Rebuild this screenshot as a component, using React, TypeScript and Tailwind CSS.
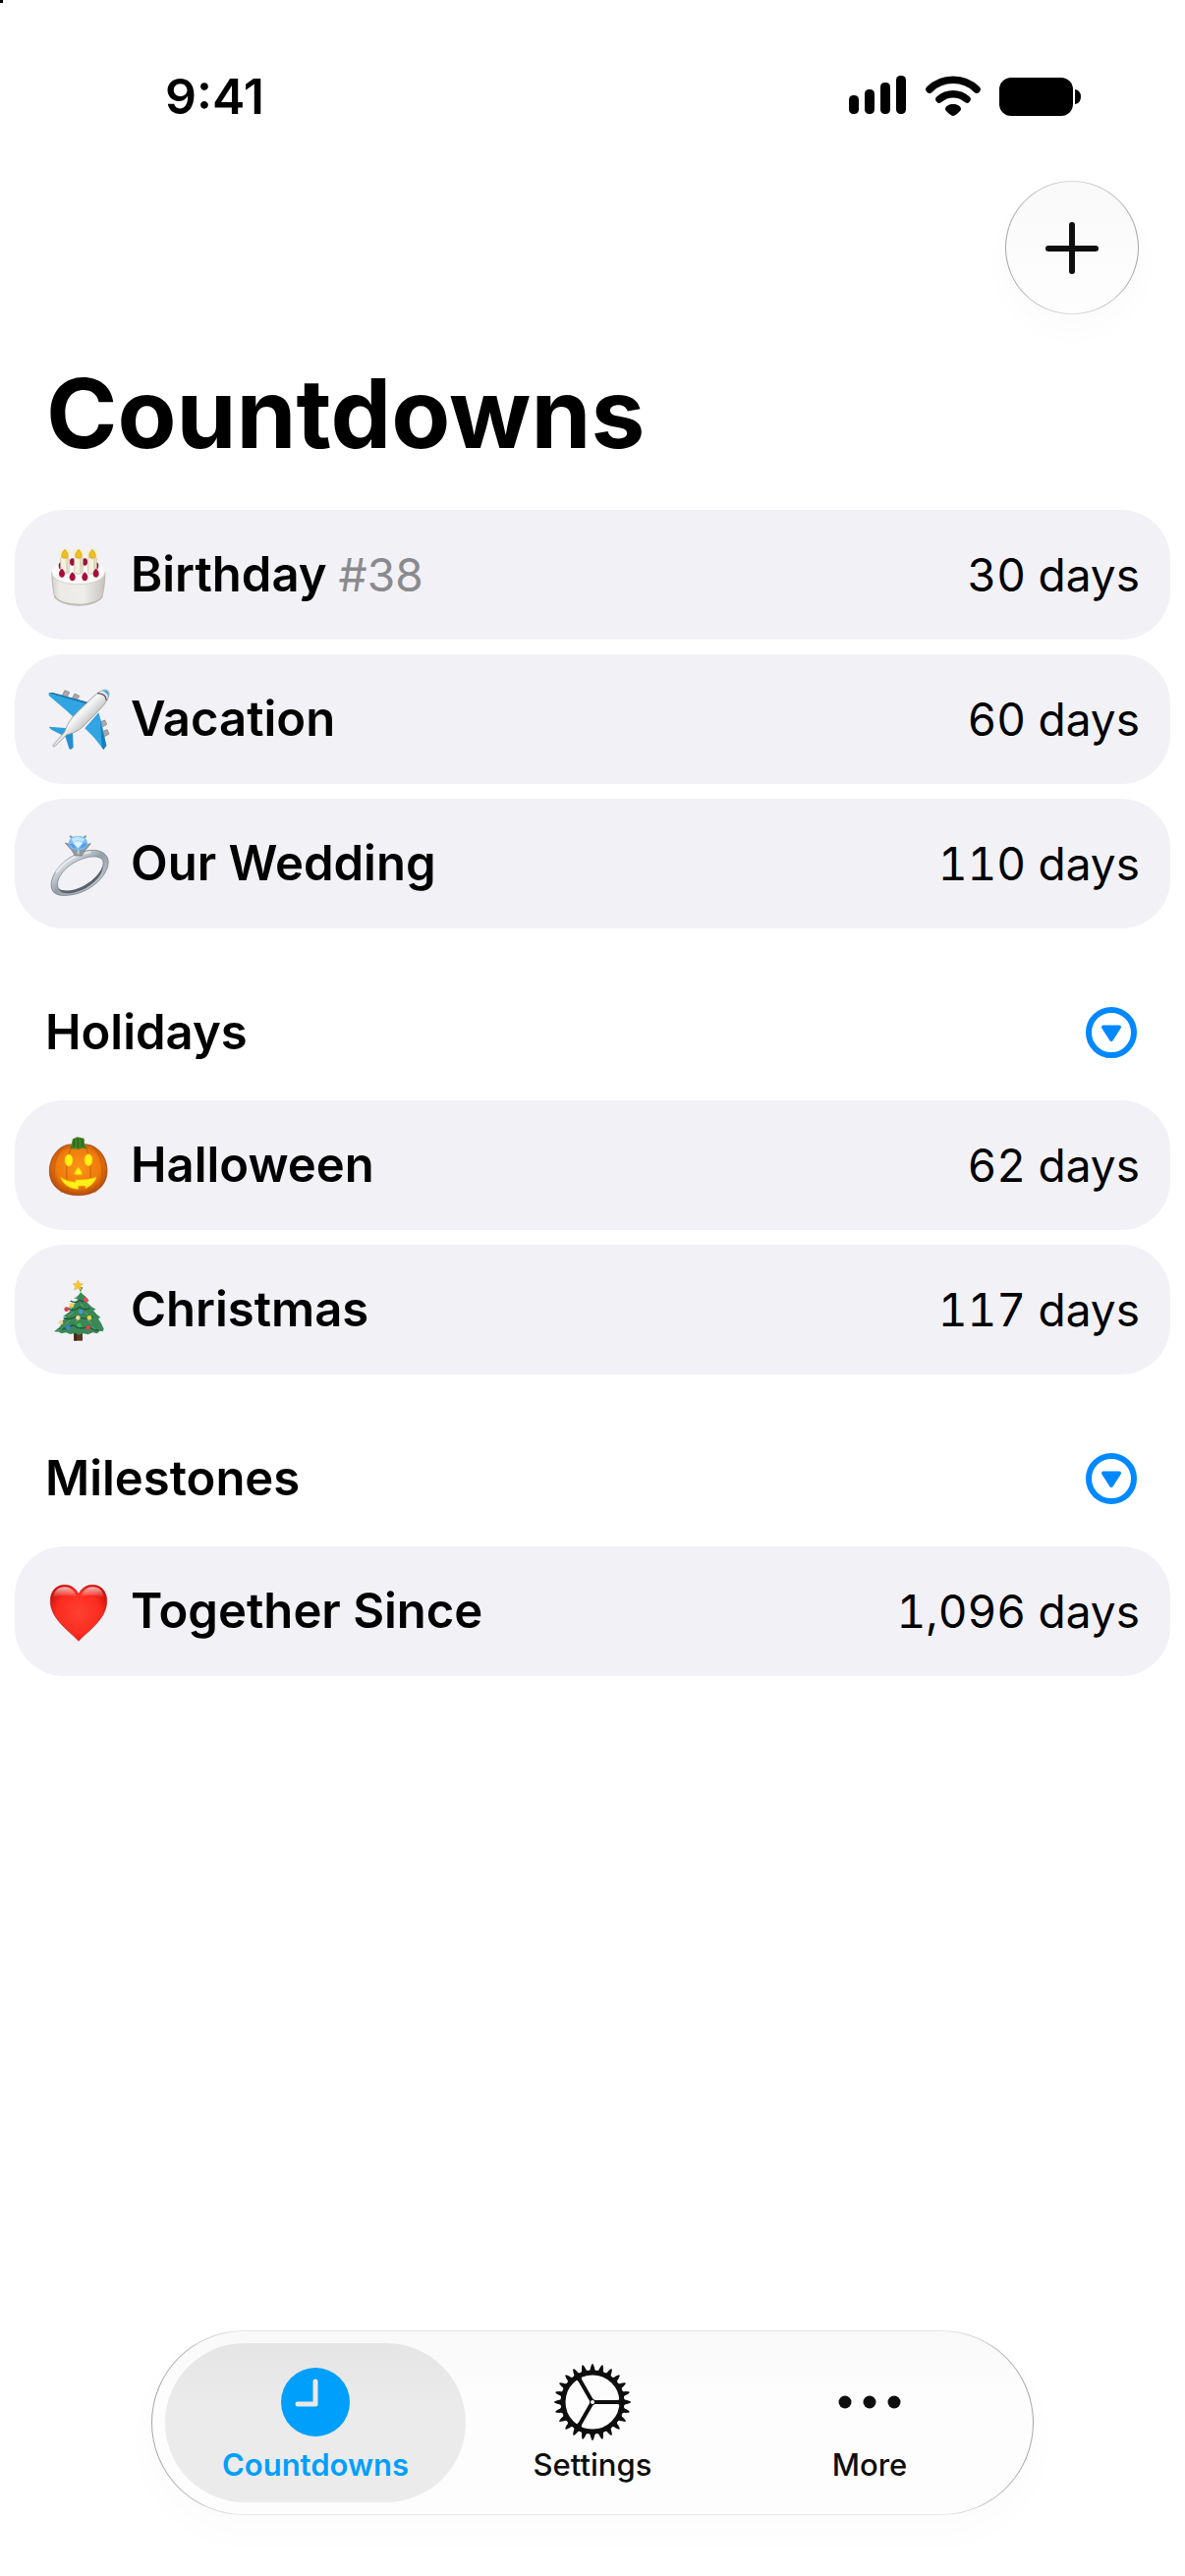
import type { ReactNode } from "react";

function CakeIcon() {
  return (
    <svg viewBox="45 66 198 198" className="size-[66px] shrink-0" aria-hidden="true">
      <defs>
        <linearGradient id="cakeSide" x1="0" x2="1" y1="0" y2="0">
          <stop offset="0" stopColor="#d2cfca" />
          <stop offset="0.15" stopColor="#ebeae6" />
          <stop offset="0.6" stopColor="#eeedea" />
          <stop offset="1" stopColor="#c6c3bd" />
        </linearGradient>
        <radialGradient id="glow">
          <stop offset="0" stopColor="#ffe45c" stopOpacity="1" />
          <stop offset="1" stopColor="#fff3a8" stopOpacity="0" />
        </radialGradient>
      </defs>
      <path d="M65 158c1 28 4 54 8 70 4 16 34 31 74 31s69-15 73-31c4-16 7-42 8-70z" fill="url(#cakeSide)" stroke="#aaa69e" strokeWidth="2" />
      <path d="M73 230c8 15 36 26 74 26s66-11 73-26" fill="none" stroke="#bcb8b0" strokeWidth="4" />
      <ellipse cx="146" cy="158" rx="81" ry="36" fill="#fbfbfa" />
      <path d="M65 158c2 48 160 48 162 0" fill="none" stroke="#d8d5cf" strokeWidth="3" />
      {[[128, 126], [166, 126], [94, 138], [200, 138]].map(([x, y]) => (
        <ellipse key={x} cx={x} cy={y} rx="8" ry="11" fill="#9c1237" />
      ))}
      {[105, 147, 189].map((x) => (
        <g key={x}>
          <circle cx={x} cy="101" r="22" fill="url(#glow)" />
          <rect x={x - 13} y="111" width="26" height="51" rx="6" fill="#f4f1df" stroke="#bfbaa0" strokeWidth="2" />
          <path d={`M${x + 7} 114v45`} stroke="#dad5bb" strokeWidth="7" />
          <path d={`M${x} 88c7 9 11 15 9 22-2 6-16 6-18 0-2-7 2-13 9-22z`} fill="#f0c022" stroke="#c4961a" strokeWidth="2" />
        </g>
      ))}
      {[[96, 160], [128, 171], [166, 171], [200, 160]].map(([x, y]) => (
        <path key={x} d={`M${x} ${y - 14}c6 5 9 10 9 15 0 8-4 12-9 12s-9-4-9-12c0-5 3-10 9-15z`} fill="#a80f3a" />
      ))}
    </svg>
  );
}

function PlaneIcon() {
  return (
    <svg viewBox="45 57 198 198" className="size-[66px] shrink-0" aria-hidden="true">
      <defs>
        <linearGradient id="body" x1="0" y1="0" x2="1" y2="1">
          <stop offset="0.3" stopColor="#b8b8b8" />
          <stop offset="0.45" stopColor="#f7f7f7" />
          <stop offset="0.58" stopColor="#cccccc" />
          <stop offset="0.72" stopColor="#7d7d7d" />
        </linearGradient>
      </defs>
      <g fill="#aaa9a8" stroke="#777" strokeWidth="2">
        <path d="M95 88l10-20 14 6-10 20z" />
        <path d="M124 98l11-20 14 7-12 20z" />
        <path d="M207 168l20-9 6 13-19 11z" />
        <path d="M214 196l20-8 6 13-19 11z" />
      </g>
      <path d="M56 76l11-1 107 29-14 42-22 10-30-28-52-44z" fill="#31a5e4" />
      <path d="M56 76l11-1 107 29-3 5z" fill="#1b6e9d" />
      <path d="M166 184l42-48 8 26 16 75-9 12-28-36z" fill="#31a5e4" />
      <path d="M213 162l19 75-9 12-5-8z" fill="#1680bb" />
      <path d="M56 179l60 5-9 26-43-22z" fill="#2d9edc" />
      <path d="M104 202l25-6 2 46-8 7-5-3z" fill="#2590ce" />
      <path d="M68 237l36-42c9-26 22-45 42-64l46-44c15-14 29-22 40-20 9 2 10 12 5 24-5 14-17 27-33 43l-38 39c-16 17-34 26-54 30l-40 38z" fill="url(#body)" stroke="#858585" strokeWidth="2" />
      <path d="M218 69c16-6 24 4 20 19-2-9-9-16-20-19z" fill="#35a9e6" />
      <path d="M204 77c18 0 27 7 28 22" fill="none" stroke="#575757" strokeWidth="4" />
    </svg>
  );
}

function RingIcon() {
  return (
    <svg viewBox="45 48 198 198" className="size-[66px] shrink-0" aria-hidden="true">
      <defs>
        <linearGradient id="band" x1="0" y1="0" x2="1" y2="1">
          <stop offset="0" stopColor="#8f959c" />
          <stop offset="0.28" stopColor="#d3d8dd" />
          <stop offset="0.5" stopColor="#949da7" />
          <stop offset="0.75" stopColor="#b9c0c8" />
          <stop offset="1" stopColor="#5f6872" />
        </linearGradient>
      </defs>
      <path
        fillRule="evenodd"
        d="M65 224c-7-22 7-54 35-80 32-29 80-44 108-36 24 7 34 24 28 47-9 38-58 79-108 87-34 6-57 1-63-18zM84 220c5 13 24 14 43 10 40-8 83-43 93-72 6-18 0-30-20-32-24-3-63 11-88 33-22 19-34 44-28 61z"
        fill="url(#band)"
        stroke="#6a727b"
        strokeWidth="2"
      />
      <path d="M221 152c-6 28-50 68-94 76-18 3-33 2-42-5 7 16 28 17 46 13 46-10 92-48 90-84z" fill="#59626c" />
      <path d="M80 172c20-30 60-55 102-60" fill="none" stroke="#eef1f4" strokeWidth="7" strokeLinecap="round" opacity="0.75" />
      <path d="M106 84l12 4 20 18h18l20-18 8-2-18 22-9 15h-21l-9-15z" fill="#949aa1" stroke="#6f767e" strokeWidth="2" />
      <path d="M122 64l8 6M168 64l-8 6" stroke="#8d949b" strokeWidth="6" strokeLinecap="round" />
      <ellipse cx="145" cy="84" rx="29" ry="22" fill="#79c0f8" />
      <path d="M124 72l20-8 22 8-8 10-14-6-12 8z" fill="#bfe6ff" />
      <path d="M130 84l14-6 16 6-15 16z" fill="#dcf4ff" />
      <path d="M118 86l12 0 12 16-14-4zM174 84l-13 1-12 18 16-6z" fill="#4f9fec" />
      <path d="M146 116v-8" stroke="#c7ccd1" strokeWidth="6" strokeLinecap="round" />
    </svg>
  );
}

function PumpkinIcon() {
  return (
    <svg viewBox="45 69 198 198" className="size-[66px] shrink-0" aria-hidden="true">
      <defs>
        <radialGradient id="pumpkin" cx="0.5" cy="0.45" r="0.58">
          <stop offset="0" stopColor="#fb9418" />
          <stop offset="0.65" stopColor="#ef7a0d" />
          <stop offset="1" stopColor="#a94208" />
        </radialGradient>
      </defs>
      <path d="M146 108c18-7 43-4 60 12 19 16 28 40 28 66 0 45-36 74-88 74s-88-29-88-74c0-26 10-50 28-66 17-16 42-19 60-12z" fill="url(#pumpkin)" stroke="#933e0c" strokeWidth="2" />
      <g fill="none" stroke="#c4570a" strokeWidth="4" opacity="0.65">
        <path d="M100 112c-34 36-38 108-4 139M126 110c-19 40-21 104-6 147M168 110c19 40 21 104 6 147M192 112c34 36 38 108 4 139" />
      </g>
      <path d="M119 116c6-4 8-10 7-17l3-11 14-6 21 4 1 15c1 8 4 12 9 16-10 2-14-2-18-1-7 5-14 3-19 1-6 2-12 1-18-1z" fill="#3e8122" />
      <path d="M134 89l-1 23M145 86v27M157 88l2 24" stroke="#285e14" strokeWidth="3" />
      <g fill="#fff115" stroke="#f8c80c" strokeWidth="2">
        <ellipse cx="117" cy="153" rx="12" ry="18" />
        <ellipse cx="177" cy="152" rx="12" ry="18" />
        <path d="M146 175c6 6 10 13 12 20-7 3-17 3-24 0 2-7 6-14 12-20z" />
        <path d="M92 205c14 10 30 14 46 15v-7c22 1 44-1 63-8-6 16-16 26-33 34v-8h-22v10c-26-1-46-14-54-36z" />
      </g>
    </svg>
  );
}

const ornaments = [
  [169, 579, "#e94a5d"], [126, 596, "#f2cf58"], [110, 608, "#dc3e4e"], [154, 615, "#4b93df"],
  [145, 634, "#f1d58c"], [180, 634, "#f3cf3c"], [93, 648, "#f2d68b"], [115, 664, "#3f7fd6"],
  [149, 657, "#43b65a"], [176, 664, "#e2404f"],
] as const;

function TreeIcon() {
  return (
    <svg viewBox="45 510 198 198" className="size-[66px] shrink-0" aria-hidden="true">
      <path d="M132 675h27v29h-27z" fill="#5a3523" />
      <path d="M138 680v24" stroke="#3c2114" strokeWidth="5" />
      <path d="M146 540c4 13 11 21 21 28l12 15-7 3 14 14 14 8-8 4 12 13 10 8-7 4 8 12 9 19-3 8-9-2-8 8-14-3-14 6-14-3-14 4-12-5-14 3-14-5-13 3-9-5-14-1 16-13 8-11-10-1 16-12 8-8-11-1 18-13 10-12-11-2 20-13 9-13-9-1c9-8 19-20 24-35z" fill="#3b8757" />
      <g fill="none" stroke="#1f5a3b" strokeWidth="4">
        <path d="M122 582c13 8 24 3 30-2 6 5 12 5 18 3M113 605c15 9 28 5 37-4 9 8 20 9 31 4M101 634c14 6 28 4 40-5 13 9 35 10 52 2M88 668c16 2 30-4 42-12 14 11 35 13 46 4 9 8 20 12 32 12" />
      </g>
      <g fill="none" stroke="#64ad7a" strokeWidth="3">
        <path d="M134 576l8-8M124 603l12-10M162 600l-9-9M116 629l15-12M175 624l-9-8M104 656l18-15M186 651l-12-11M84 676l14-11M198 670l-10-9M138 647l8-8" />
      </g>
      <path d="M145 519l5 10 11 1-8 8 3 12-11-6-11 6 3-12-8-8 11-1z" fill="#f6c533" stroke="#d9a422" strokeWidth="1" />
      {ornaments.map(([x, y, fill]) => (
        <circle key={`${x}-${y}`} cx={x} cy={y} r="7" fill={fill} />
      ))}
    </svg>
  );
}

function HeartIcon() {
  return (
    <svg viewBox="45 411 198 198" className="size-[66px] shrink-0" aria-hidden="true">
      <defs>
        <radialGradient id="heart" cx="0.5" cy="0.5" r="0.6">
          <stop offset="0" stopColor="#ff4030" />
          <stop offset="0.65" stopColor="#fa2c20" />
          <stop offset="1" stopColor="#c80d08" />
        </radialGradient>
        <linearGradient id="heartShine" x1="0" x2="0" y1="0" y2="1">
          <stop offset="0" stopColor="#fff" stopOpacity="0.7" />
          <stop offset="1" stopColor="#fff" stopOpacity="0" />
        </linearGradient>
      </defs>
      <path d="M147 601c-10-12-26-24-44-42-28-28-42-52-42-81 0-29 18-48 43-48 19 0 34 10 43 28 9-18 24-28 43-28 25 0 43 19 43 48 0 29-14 53-42 81-18 18-34 30-44 42z" fill="url(#heart)" stroke="#bf1510" strokeWidth="2" />
      <path d="M69 468c3-20 16-32 35-32 17 0 30 10 37 29-22-5-48-6-72 3zM225 468c-3-20-16-32-35-32-17 0-30 10-37 29 22-5 48-6 72 3z" fill="url(#heartShine)" />
    </svg>
  );
}

function ClockIcon() {
  return (
    <svg viewBox="0 0 80 80" className="size-20" aria-hidden="true">
      <circle cx="40" cy="40" r="35" fill="#009ffb" />
      <path d="M40 19v23H22" fill="none" stroke="#e9e9e9" strokeWidth="5" strokeLinecap="round" strokeLinejoin="round" />
    </svg>
  );
}

function GearIcon() {
  return (
    <svg viewBox="0 0 80 80" className="size-20" aria-hidden="true" fill="#0e0e0e">
      <circle cx="40" cy="40" r="30" fill="none" stroke="#0e0e0e" strokeWidth="5" />
      {Array.from({ length: 24 }, (_, i) => (
        <path key={i} d="M35 9c2-1 3-2 3-4l1-3q1-2 2 0l1 3c0 2 1 3 3 4z" transform={`rotate(${i * 15} 40 40)`} />
      ))}
      {[0, 120, 240].map((angle) => (
        <path key={angle} d="M42 38h23q3 0 4-3v10q-1-3-4-3H42z" transform={`rotate(${angle} 40 40)`} />
      ))}
      <circle cx="40" cy="40" r="3" />
      <circle cx="40" cy="40" r="2" fill="#fcfcfc" />
    </svg>
  );
}

function MoreIcon() {
  return (
    <svg viewBox="0 0 80 80" className="size-20" aria-hidden="true" fill="#0e0e0e">
      <circle cx="15" cy="40" r="6.5" />
      <circle cx="40" cy="40" r="6.5" />
      <circle cx="65" cy="40" r="6.5" />
    </svg>
  );
}

type Countdown = { name: string; note?: string; days: string; icon: ReactNode };

const sections: { title?: string; items: Countdown[] }[] = [
  {
    items: [
      { name: "Birthday", note: "#38", days: "30 days", icon: <CakeIcon /> },
      { name: "Vacation", days: "60 days", icon: <PlaneIcon /> },
      { name: "Our Wedding", days: "110 days", icon: <RingIcon /> },
    ],
  },
  {
    title: "Holidays",
    items: [
      { name: "Halloween", days: "62 days", icon: <PumpkinIcon /> },
      { name: "Christmas", days: "117 days", icon: <TreeIcon /> },
    ],
  },
  {
    title: "Milestones",
    items: [{ name: "Together Since", days: "1,096 days", icon: <HeartIcon /> }],
  },
];

const tabs = [
  { label: "Countdowns", icon: <ClockIcon />, active: true },
  { label: "Settings", icon: <GearIcon />, active: false },
  { label: "More", icon: <MoreIcon />, active: false },
];

function StatusBar() {
  return (
    <div className="flex h-[128px] items-center justify-between pt-[68px] pr-[105px] pl-[168px]">
      <span className="text-[50px] leading-[60px] font-semibold">9:41</span>
      <div className="flex items-center gap-[19px]">
        <svg viewBox="0 0 59 42" className="h-[42px] w-[59px]" aria-hidden="true">
          <rect x="0" y="20" width="10" height="19" rx="4.5" />
          <rect x="16" y="14" width="10" height="25" rx="4.5" />
          <rect x="32" y="7" width="10" height="32" rx="4.5" />
          <rect x="48" y="0" width="10" height="39" rx="4.5" />
        </svg>
        <svg viewBox="0 0 56 42" className="h-[42px] w-[56px]" aria-hidden="true">
          <path d="M4 14C17 1 39 1 52 14M14 24C22 17 34 17 42 24" fill="none" stroke="#000" strokeWidth="7.5" strokeLinecap="round" />
          <path d="M28 29c4 0 8 2 8 5 0 2-6 7-8 7s-8-5-8-7c0-3 4-5 8-5z" />
        </svg>
        <svg viewBox="0 0 84 42" className="h-[42px] w-[84px]" aria-hidden="true">
          <rect x="0" y="2" width="75" height="39" rx="12" />
          <path d="M77 14q6 1 6 7.500q0 6.500-6 7.500z" />
        </svg>
      </div>
    </div>
  );
}

function CountdownRow({ item }: { item: Countdown }) {
  return (
    <li className="flex h-[132px] items-center gap-[21px] rounded-[50px] bg-[#f2f1f6] px-[31px]">
      {item.icon}
      <div className="flex flex-1 items-baseline gap-[12px] whitespace-nowrap">
        <span className="text-[49px] leading-[62px] font-semibold">{item.name}</span>
        {item.note && <span className="text-[46px] leading-[62px] text-[#8a8a8e]">{item.note}</span>}
      </div>
      <span className="text-[46px] leading-[62px] whitespace-nowrap tabular-nums">{item.days}</span>
    </li>
  );
}

export default function App() {
  return (
    <div className="relative flex min-h-screen flex-col bg-white font-['Inter',sans-serif] text-black">
      <div className="absolute top-0 left-0 size-[3px] bg-black" />
      <StatusBar />
      <header className="px-[47px] pt-14">
        <div className="flex justify-end">
          <div className="rounded-full bg-linear-to-r from-[#a3a3a3] via-[#dedede] to-[#a3a3a3] p-px shadow-[0_16px_36px_rgba(0,0,0,0.02)]">
            <button type="button" aria-label="Add countdown" className="flex size-[134px] items-center justify-center rounded-full bg-linear-to-b from-[#f9f9f9] to-[#fefefe]">
              <svg viewBox="0 0 54 54" className="size-[54px]" aria-hidden="true">
                <path d="M27 4v47M3 28h48" stroke="#0e0e0e" strokeWidth="6" strokeLinecap="round" />
              </svg>
            </button>
          </div>
        </div>
        <h1 className="mt-10 text-[98px] leading-[122px] font-bold">Countdowns</h1>
      </header>

      <main className="px-[15px] pt-[37px]">
        {sections.map((section) => (
          <section key={section.title ?? "upcoming"}>
            {section.title && (
              <div className="flex items-center justify-between pt-[75px] pr-[32px] pb-[38px] pl-[31px]">
                <h2 className="text-[49px] leading-[62px] font-semibold">{section.title}</h2>
                <button type="button" aria-label={`Collapse ${section.title}`}>
                  <svg viewBox="0 0 56 56" className="size-[56px]" aria-hidden="true">
                    <circle cx="28" cy="28" r="23" fill="none" stroke="#0088ff" strokeWidth="6" />
                    <path d="M20 22.500h16L28 35z" fill="#0088ff" stroke="#0088ff" strokeWidth="4" strokeLinejoin="round" />
                  </svg>
                </button>
              </div>
            )}
            <ul className="flex flex-col gap-[15px]">
              {section.items.map((item) => (
                <CountdownRow key={item.name} item={item} />
              ))}
            </ul>
          </section>
        ))}
      </main>

      <div className="mx-auto mt-auto mb-[62px] w-full max-w-[898px] rounded-full bg-[linear-gradient(to_right,#a3a3a3,#e6e6e6_10%,#e6e6e6_90%,#a3a3a3)] p-px shadow-[0_16px_44px_rgba(0,0,0,0.02)]">
        <nav className="flex rounded-full bg-linear-to-b from-[#f9f9f9] to-[#fdfdfd] to-40% px-[13px] py-[12px]">
          {tabs.map((tab) => (
            <button
              key={tab.label}
              type="button"
              aria-current={tab.active ? "page" : undefined}
              className={
                tab.active
                  ? "flex h-[162px] flex-1 flex-col items-center rounded-full bg-linear-to-b from-[#e5e5e5] to-[#ebebeb] to-40% pt-[20px] text-[#009ffb]"
                  : "-ml-6 flex h-[162px] flex-1 flex-col items-center rounded-full pt-[20px] text-[#0e0e0e]"
              }
            >
              {tab.icon}
              <span className={tab.active ? "mt-1 text-[31px] leading-[40px] font-semibold" : "mt-1 text-[31px] leading-[40px] font-medium"}>
                {tab.label}
              </span>
            </button>
          ))}
        </nav>
      </div>
    </div>
  );
}
